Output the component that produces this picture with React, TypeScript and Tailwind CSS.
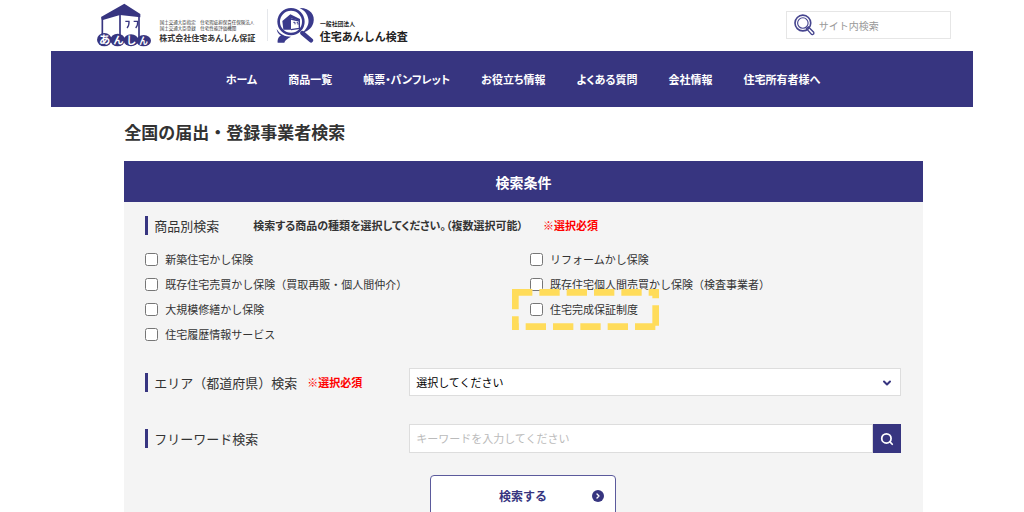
import { useState } from "react";
import { ChevronDown, ChevronRight, Search } from "lucide-react";

const NAV_ITEMS = [
  "ホーム",
  "商品一覧",
  "帳票・パンフレット",
  "お役立ち情報",
  "よくある質問",
  "会社情報",
  "住宅所有者様へ",
];

interface Product {
  id: string;
  label: string;
  highlighted?: boolean;
}

const PRODUCTS: Product[] = [
  { id: "new", label: "新築住宅かし保険" },
  { id: "reform", label: "リフォームかし保険" },
  { id: "used-resale", label: "既存住宅売買かし保険（買取再販・個人間仲介）" },
  { id: "used-personal", label: "既存住宅個人間売買かし保険（検査事業者）" },
  { id: "large-repair", label: "大規模修繕かし保険" },
  { id: "completion", label: "住宅完成保証制度", highlighted: true },
  { id: "history", label: "住宅履歴情報サービス" },
];

const PREFECTURES = ["北海道", "東京都", "愛知県", "大阪府", "福岡県"];

function HoshoLogo() {
  return (
    <svg viewBox="21 9 480 132" className="w-40 h-11" role="img" aria-label="株式会社住宅あんしん保証">
      <path d="M103 11 L33 51 L36 61 L90 45 L151 52 V42 Z" fill="#373580" />
      <path d="M37 54 V108 M90 42 V108 M147 48 V112" stroke="#373580" strokeWidth="5" fill="none" />
      <path d="M106 64 H117 Q118 77 111 84 M131 64 H143 Q144 77 137 84" stroke="#373580" strokeWidth="4" fill="none" />
      <g fill="#373580">
        <ellipse cx="43" cy="119" rx="22" ry="20" />
        <ellipse cx="83" cy="120" rx="22" ry="19" />
        <ellipse cx="123" cy="121" rx="22" ry="18" />
        <ellipse cx="161" cy="122" rx="22" ry="17" />
      </g>
      <g fill="#fff" fontWeight="700" textAnchor="middle">
        <text x="44" y="131" fontSize="34">あ</text>
        <text x="85" y="132" fontSize="31">ん</text>
        <text x="124" y="132" fontSize="30">し</text>
        <text x="161" y="131" fontSize="26">ん</text>
      </g>
      <g fill="#333">
        <text x="209" y="71" fontSize="13.5">国土交通大臣指定　住宅瑕疵担保責任保険法人</text>
        <text x="209" y="90" fontSize="13.5">国土交通大臣登録　住宅性能評価機関</text>
        <text x="208" y="122" fontSize="24" fontWeight="700">株式会社住宅あんしん保証</text>
      </g>
    </svg>
  );
}

function KensaLogo() {
  return (
    <svg viewBox="33 18 402 108" className="w-[134px] h-9" role="img" aria-label="住宅あんしん検査">
      <circle cx="78" cy="62" r="37" fill="none" stroke="#3a3a8c" strokeWidth="8" />
      <path d="M104 21 C134 20 152 42 145 66 C140 84 124 92 110 97 C125 84 133 70 130 54 C127 38 118 28 104 21 Z" fill="#3a3a8c" />
      <path d="M35 84 C44 100 60 107 78 107 C66 113 60 118 58 125 H38 C37 116 40 106 48 104 C40 99 36 93 35 84 Z" fill="#3a3a8c" />
      <path d="M112 96 L138 118" stroke="#3a3a8c" strokeWidth="13" strokeLinecap="round" />
      <path d="M52 60 L76 40 L105 54 V60 L78 52 V86 H55 Z" fill="#3a3a8c" />
      <path d="M78 54 L103 60 V82 L78 86" fill="none" stroke="#3a3a8c" strokeWidth="4" />
      <path d="M85 64 H90 V70 M95 65 H99 V71" fill="none" stroke="#3a3a8c" strokeWidth="3" />
      <g fill="#222">
        <text x="165" y="74" fontSize="17.5" fontWeight="700">一般社団法人</text>
        <text x="164" y="119" fontSize="33" fontWeight="700">住宅あんしん検査</text>
      </g>
    </svg>
  );
}

function LensIcon() {
  return (
    <svg viewBox="0 0 64 66" className="w-[21px] h-[22px] shrink-0" fill="none" stroke="#46458f" aria-hidden="true">
      <circle cx="27" cy="27" r="24" strokeWidth="5" />
      <circle cx="27" cy="27" r="16" strokeWidth="3.5" />
      <path d="M38 44 L44 39 L60 55 Q62 60 57 62 Q54 63 52 60 Z" strokeWidth="4" />
    </svg>
  );
}

// dashed marker drawn over the list around one product
function Marker() {
  return (
    <svg
      viewBox="36 145 441 123"
      className="absolute -left-[18px] -top-2 w-[147px] h-[41px] max-w-none pointer-events-none"
      fill="none"
      stroke="#ffdc5a"
      strokeWidth="20"
      strokeDasharray="61 21"
      aria-hidden="true"
    >
      <path d="M36 155 H477" />
      <path d="M467 145 V268" strokeDashoffset="33" />
      <path d="M36 258 H477" strokeDashoffset="41" />
      <path d="M46 145 V268" />
    </svg>
  );
}

function Required() {
  return <span className="text-[11px] font-bold text-[#ff0000]">※選択必須</span>;
}

export default function App() {
  const [selected, setSelected] = useState<string[]>([]);
  const [area, setArea] = useState("");
  const [keyword, setKeyword] = useState("");

  const toggle = (id: string) =>
    setSelected((prev) => (prev.includes(id) ? prev.filter((p) => p !== id) : [...prev, id]));

  return (
    <div className="h-screen overflow-hidden bg-white text-[#333] font-['Noto_Sans_CJK_JP',sans-serif]">
      <div className="w-[90%] mx-auto">
        <header className="flex items-start justify-between h-[51px] pl-[46px] pr-[22px]">
          <div className="flex items-center pt-[3px]">
            <a href="#hosho">
              <HoshoLogo />
            </a>
            <div className="w-px h-8 ml-[10px] mr-2 bg-gray-200" />
            <a href="#kensa">
              <KensaLogo />
            </a>
          </div>
          <label className="flex items-center gap-1 w-[165px] h-7 mt-[11px] pl-[7px] border border-[#e6e6e6]">
            <LensIcon />
            <input
              type="search"
              aria-label="サイト内検索"
              placeholder="サイト内検索"
              className="w-full min-w-0 text-[10px] outline-none bg-transparent placeholder:text-[#999]"
            />
          </label>
        </header>

        <nav className="flex items-center justify-center gap-[31px] h-14 pl-[22px] bg-[#373580] text-white text-[11px] font-bold whitespace-nowrap [font-feature-settings:'palt']">
          {NAV_ITEMS.map((item) => (
            <a key={item} href="#menu">
              {item}
            </a>
          ))}
        </nav>

        <main className="pl-[73px] pr-[50px]">
          <h1 className="pt-3 pb-4 text-[17px] leading-[26px] font-bold">全国の届出・登録事業者検索</h1>

          <form className="bg-[#f4f4f4]" onSubmit={(e) => e.preventDefault()}>
            <h2 className="h-[41px] leading-[42px] bg-[#373580] text-white text-sm font-bold text-center">検索条件</h2>

            <div className="pl-[21px] pr-[22px] pt-[14px]">
              <div className="flex items-center h-[19px]">
                <h3 className="h-full w-[108px] pl-1.5 border-l-[3px] border-[#373580] text-[13px] leading-[19px]">
                  商品別検索
                </h3>
                <p className="mr-5 text-[11px] font-bold [font-feature-settings:'palt']">
                  検索する商品の種類を選択してください。（複数選択可能）
                </p>
                <Required />
              </div>

              <div className="grid grid-cols-2 gap-x-[14px] mt-3">
                {PRODUCTS.map((product) => (
                  <div key={product.id} className="relative h-[25px]">
                    <label className="flex items-center gap-[7px] h-full text-[11px] whitespace-nowrap">
                      <input
                        type="checkbox"
                        className="size-[13px] shrink-0"
                        checked={selected.includes(product.id)}
                        onChange={() => toggle(product.id)}
                      />
                      {product.label}
                    </label>
                    {product.highlighted && <Marker />}
                  </div>
                ))}
              </div>

              <div className="flex items-center mt-[21px]">
                <div className="flex items-center gap-2.5 w-[264px] shrink-0">
                  <label
                    htmlFor="area"
                    className="h-[19px] pl-1.5 border-l-[3px] border-[#373580] text-[13px] leading-[19px]"
                  >
                    エリア（都道府県）検索
                  </label>
                  <Required />
                </div>
                <div className="relative flex-1">
                  <select
                    id="area"
                    value={area}
                    onChange={(e) => setArea(e.target.value)}
                    className="block appearance-none w-full h-7 px-1.5 text-[11px] text-black bg-white border border-[#ddd]"
                  >
                    <option value="">選択してください</option>
                    {PREFECTURES.map((name) => (
                      <option key={name}>{name}</option>
                    ))}
                  </select>
                  <ChevronDown
                    className="absolute right-2 top-[9px] size-3 text-[#373580] pointer-events-none"
                    strokeWidth={4}
                  />
                </div>
              </div>

              <div className="flex items-center mt-7">
                <div className="w-[264px] shrink-0">
                  <label
                    htmlFor="keyword"
                    className="block h-[19px] pl-1.5 border-l-[3px] border-[#373580] text-[13px] leading-[19px]"
                  >
                    フリーワード検索
                  </label>
                </div>
                <div className="flex flex-1 h-[29px]">
                  <input
                    id="keyword"
                    type="text"
                    value={keyword}
                    onChange={(e) => setKeyword(e.target.value)}
                    placeholder="キーワードを入力してください"
                    className="flex-1 min-w-0 px-1.5 text-[11px] bg-white border border-[#ddd] placeholder:text-[#bbb]"
                  />
                  <button
                    type="button"
                    aria-label="キーワードで検索"
                    className="flex items-center justify-center w-7 bg-[#373580] text-white"
                  >
                    <Search className="size-3.5" strokeWidth={3} />
                  </button>
                </div>
              </div>

              <button
                type="submit"
                className="relative block w-[186px] h-[41px] mt-[22px] mx-auto rounded-sm border border-[#5b5a9c] bg-white text-xs font-bold text-[#373580]"
              >
                検索する
                <span className="absolute right-[11px] top-[14px] flex items-center justify-center size-3 rounded-full bg-[#373580] text-white">
                  <ChevronRight className="size-2" strokeWidth={4} />
                </span>
              </button>
            </div>
          </form>
        </main>
      </div>
    </div>
  );
}
